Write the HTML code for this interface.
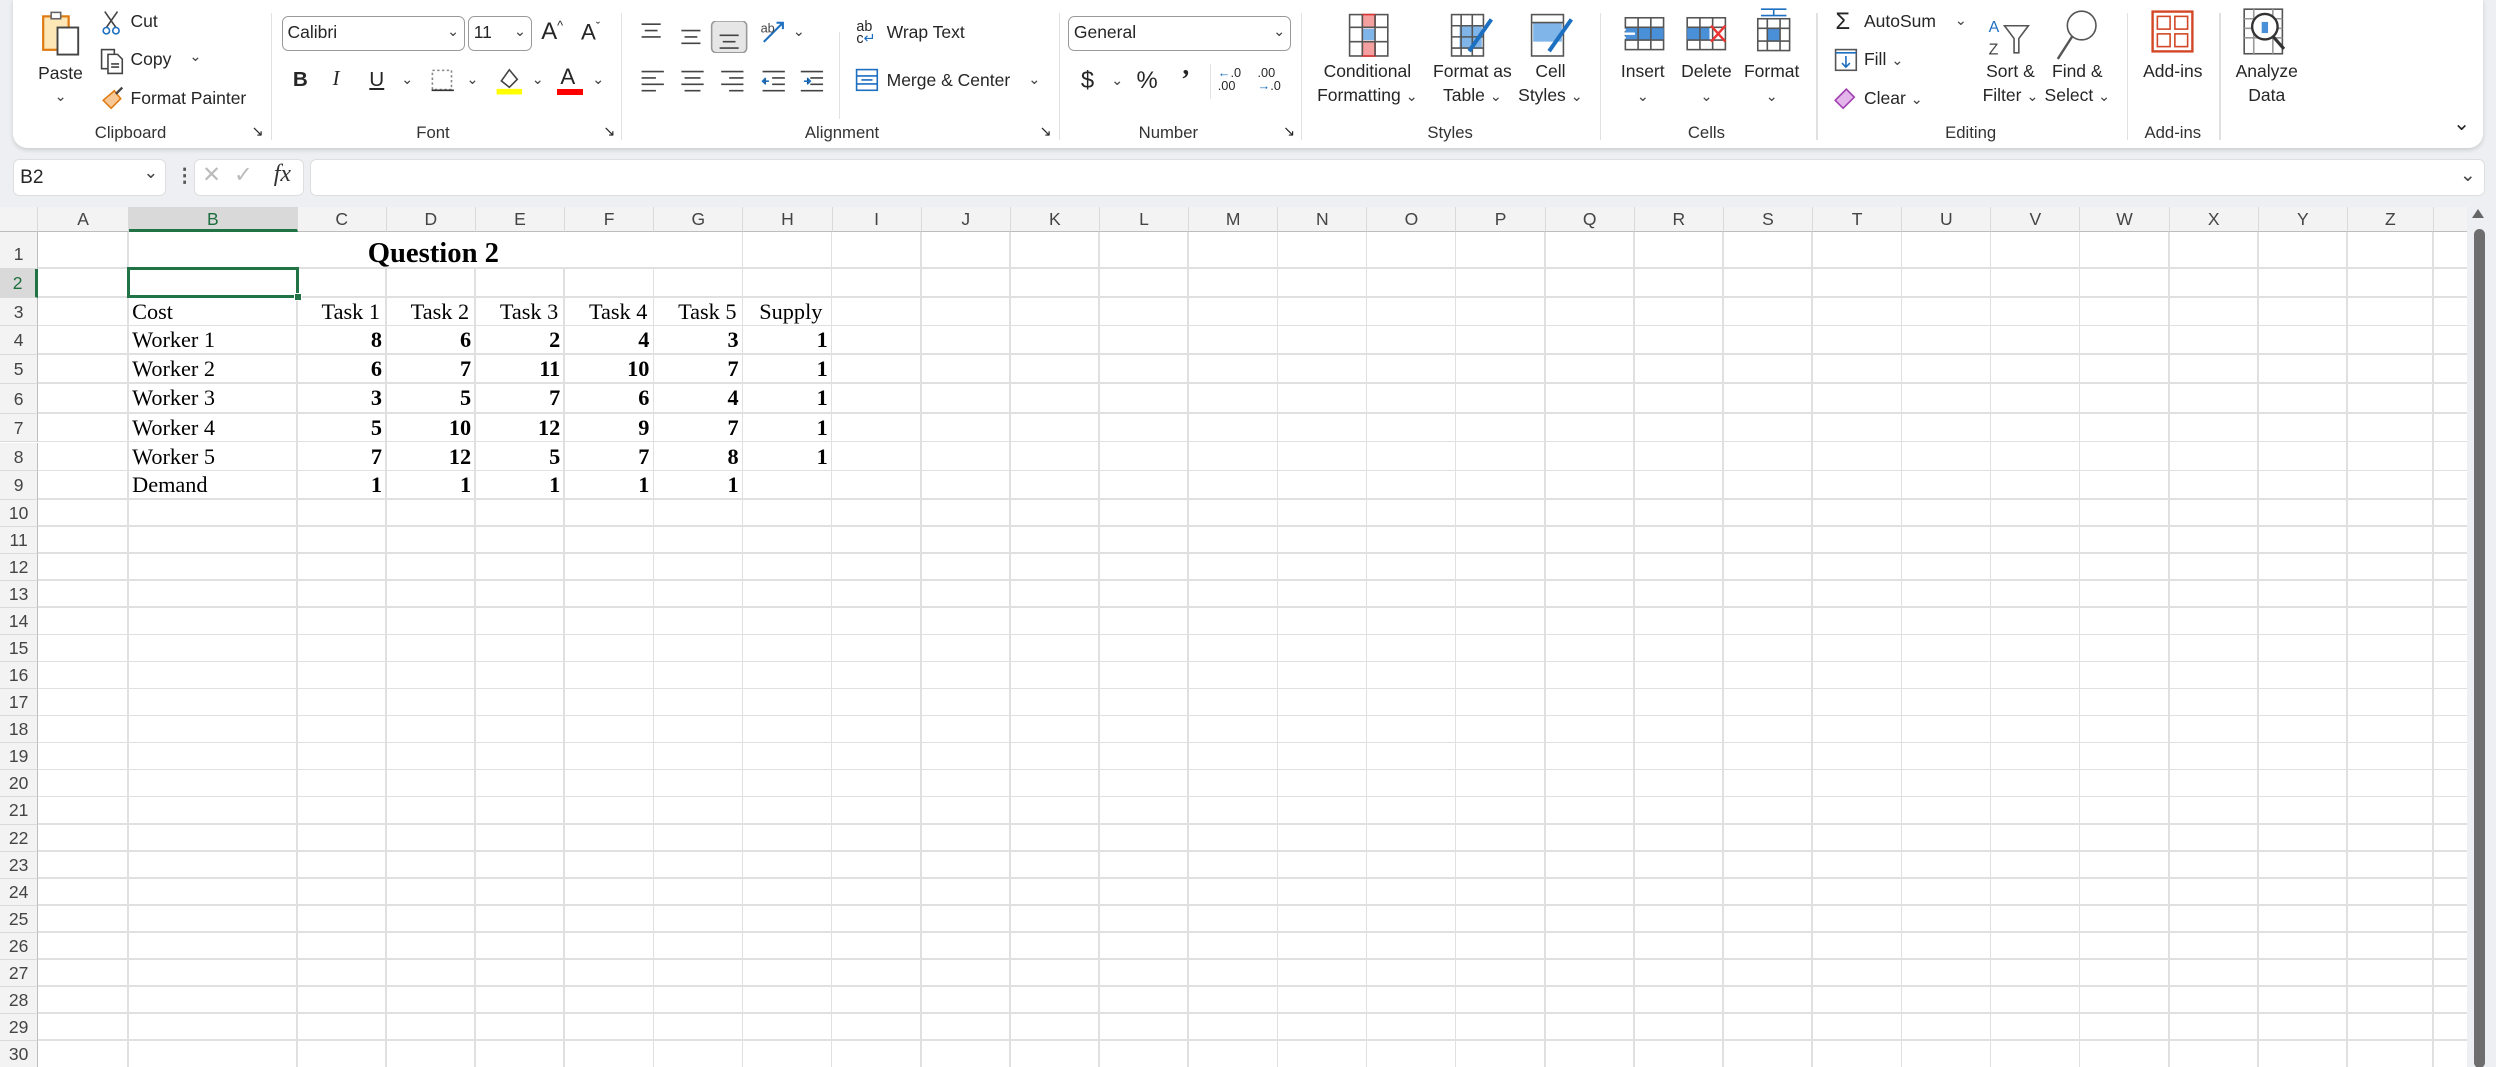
<!DOCTYPE html>
<html><head><meta charset="utf-8">
<style>
*{margin:0;padding:0;box-sizing:border-box}
html,body{width:2496px;height:1067px;overflow:hidden;background:#edeff3}
#w{position:relative;width:1568px;height:671px;zoom:1.5918;font-family:"Liberation Sans",sans-serif;color:#262626;font-size:11px}
.a{position:absolute;white-space:nowrap}
.rib{position:absolute;left:8px;top:0;width:1552px;height:93px;background:#fff;border-radius:0 0 9px 9px;box-shadow:0 1px 3px rgba(0,0,0,.15)}
.sep{position:absolute;top:8px;width:1px;height:80px;background:#e1e1e1}
.lbl{position:absolute;top:77px;font-size:10.5px;color:#333;transform:translateX(-50%)}
.c{transform:translateX(-50%);text-align:center;line-height:15px}
.dd{position:absolute;border:1px solid #9a9a9a;border-radius:4px;background:#fff;height:22px;line-height:20px;padding-left:3px;font-size:11px}
.chev{font-size:9px;color:#444}
.grid{position:absolute;left:0;top:130px;width:1550px;height:541px;background:#fff}
.ch{position:absolute;top:0;height:16px;line-height:16px;text-align:center;font-size:11px;color:#444;background:#f3f3f3;border-right:1px solid #dadada;border-bottom:1px solid #bdbdbd}
.rh{position:absolute;left:0;width:24px;text-align:center;font-size:11px;color:#444;background:#f3f3f3;border-bottom:1px solid #dadada;border-right:1px solid #bdbdbd}
.vl{position:absolute;top:16px;width:1px;height:525px;background:#e0e0e0}
.hl{position:absolute;left:24px;width:1526px;height:1px;background:#e0e0e0}
.t{position:absolute;font-family:"Liberation Serif",serif;font-size:14px;color:#000;line-height:18px}
.n{font-weight:bold;text-align:right;width:52px}
</style></head><body><div id="w">

<div class="rib"></div>
<!-- Clipboard -->
<svg class="a" style="left:25px;top:6px" width="30" height="30" viewBox="0 0 30 30"><rect x="2" y="4" width="16" height="21" fill="#fde7b7" stroke="#e07b12" stroke-width="1.4"/><rect x="7" y="1.5" width="6" height="4" fill="#fff" stroke="#666"/><rect x="11" y="11" width="13" height="17" fill="#fff" stroke="#444" stroke-width="1.2"/></svg>
<div class="a c" style="left:38px;top:39px">Paste</div>
<div class="a c chev" style="left:38px;top:54px">&#8964;</div>
<svg class="a" style="left:63px;top:6px" width="14" height="16"><path d="M3 1 L10 11 M11 1 L4 11" stroke="#444" fill="none"/><circle cx="4" cy="13" r="2" fill="none" stroke="#1d6fc0"/><circle cx="10" cy="13" r="2" fill="none" stroke="#1d6fc0"/></svg>
<div class="a" style="left:82px;top:7px">Cut</div>
<svg class="a" style="left:63px;top:30px" width="16" height="17"><rect x="1" y="1" width="8" height="12" fill="none" stroke="#444"/><path d="M5 4h6l3 3v9H5z" fill="#fff" stroke="#444"/><path d="M7 10h5M7 12h5" stroke="#444"/></svg>
<div class="a" style="left:82px;top:31px">Copy</div>
<div class="a chev" style="left:119px;top:31px">&#8964;</div>
<svg class="a" style="left:63px;top:54px" width="16" height="16"><path d="M2 9 L9 3 L13 8 L7 14 Z" fill="#f7c896" stroke="#e07b12"/><path d="M10 5 L14 1" stroke="#444" stroke-width="1.5"/></svg>
<div class="a" style="left:82px;top:55px">Format Painter</div>
<div class="lbl" style="left:82px">Clipboard</div>
<div class="a" style="left:158px;top:78px;font-size:9px">&#8600;</div>
<div class="sep" style="left:170px"></div>
<!-- Font -->
<div class="dd" style="left:177px;top:10px;width:115px">Calibri<span class="chev" style="position:absolute;right:3px">&#8964;</span></div>
<div class="dd" style="left:294px;top:10px;width:40px">11<span class="chev" style="position:absolute;right:3px">&#8964;</span></div>
<div class="a" style="left:340px;top:11px;font-size:15px">A<sup style="font-size:8px">^</sup></div>
<div class="a" style="left:365px;top:12px;font-size:14px">A<sup style="font-size:8px">&#711;</sup></div>
<div class="a" style="left:184px;top:43px;font-weight:bold;font-size:13px">B</div>
<div class="a" style="left:209px;top:43px;font-style:italic;font-size:13px;font-family:'Liberation Serif',serif">I</div>
<div class="a" style="left:232px;top:43px;text-decoration:underline;font-size:13px">U</div>
<div class="a chev" style="left:252px;top:45px">&#8964;</div>
<svg class="a" style="left:270px;top:43px" width="16" height="16"><rect x="1.5" y="1.5" width="12" height="12" fill="none" stroke="#888" stroke-dasharray="1.5 1.5"/><path d="M1 14h14" stroke="#333"/></svg>
<div class="a chev" style="left:293px;top:45px">&#8964;</div>
<svg class="a" style="left:311px;top:41px" width="18" height="19"><path d="M4 10 L9 3 L14 9 L9 14 Z" fill="none" stroke="#444"/><rect x="1" y="15" width="16" height="3.5" fill="#ffff00"/></svg>
<div class="a chev" style="left:334px;top:45px">&#8964;</div>
<div class="a" style="left:352px;top:40px;font-size:14px">A</div>
<div class="a" style="left:350px;top:56px;width:16px;height:3.5px;background:#ff0000"></div>
<div class="a chev" style="left:372px;top:45px">&#8964;</div>
<div class="lbl" style="left:272px">Font</div>
<div class="a" style="left:379px;top:78px;font-size:9px">&#8600;</div>
<div class="sep" style="left:390px"></div>
<!-- Alignment -->
<svg class="a" style="left:402px;top:13px" width="70" height="20"><path d="M1 2h12M3 6h8M1 10h12" stroke="#444"/><path d="M26 6h12M28 10h8M26 14h12" stroke="#444"/><rect x="45" y="0" width="22" height="20" rx="3" fill="#e6e6e6" stroke="#999"/><path d="M50 9h12M52 13h8M50 17h12" stroke="#444"/></svg>
<svg class="a" style="left:477px;top:11px" width="18" height="18"><path d="M3 15 L15 3 M11 3h4v4" stroke="#1d6fc0" fill="none" stroke-width="1.3"/><text x="1" y="9" font-size="8" fill="#444" font-family="Liberation Sans">ab</text></svg>
<div class="a chev" style="left:498px;top:15px">&#8964;</div>
<svg class="a" style="left:402px;top:44px" width="120" height="14"><path d="M1 1h14M1 5h9M1 9h14M1 13h9M26 1h14M28 5h10M26 9h14M28 13h10M51 1h14M56 5h9M51 9h14M56 13h9M77 1h14M83 5h8M83 9h8M77 13h14M101 1h14M107 5h8M107 9h8M101 13h14" stroke="#444"/><path d="M81 7h-4M79 5l-2 2 2 2M103 7h4M105 5l2 2-2 2" stroke="#1d6fc0"/></svg>
<div class="sep" style="left:527px;top:20px;height:55px"></div>
<div class="a" style="left:538px;top:13px;font-size:9px;line-height:8px">ab<br>c<span style="color:#1d6fc0">&#8629;</span></div>
<div class="a" style="left:557px;top:14px">Wrap Text</div>
<svg class="a" style="left:537px;top:43px" width="15" height="15"><rect x="1" y="1" width="13" height="13" fill="#fff" stroke="#1d6fc0"/><path d="M1 5h13M1 10h13M4 7.5h7" stroke="#1d6fc0"/></svg>
<div class="a" style="left:557px;top:44px">Merge &amp; Center</div>
<div class="a chev" style="left:646px;top:45px">&#8964;</div>
<div class="lbl" style="left:529px">Alignment</div>
<div class="a" style="left:653px;top:78px;font-size:9px">&#8600;</div>
<div class="sep" style="left:665px"></div>
<!-- Number -->
<div class="dd" style="left:671px;top:10px;width:140px">General<span class="chev" style="position:absolute;right:3px">&#8964;</span></div>
<div class="a" style="left:679px;top:42px;font-size:15px">$</div>
<div class="a chev" style="left:698px;top:46px">&#8964;</div>
<div class="a" style="left:714px;top:42px;font-size:15px">%</div>
<div class="a" style="left:742px;top:40px;font-size:17px;font-weight:bold;font-family:'Liberation Serif',serif">&#8217;</div>
<div class="sep" style="left:760px;top:40px;height:22px"></div>
<div class="a" style="left:765px;top:42px;font-size:8px;line-height:8px"><span style="color:#1d6fc0">&#8592;</span>.0<br>.00</div>
<div class="a" style="left:790px;top:42px;font-size:8px;line-height:8px">.00<br><span style="color:#1d6fc0">&#8594;</span>.0</div>
<div class="lbl" style="left:734px">Number</div>
<div class="a" style="left:806px;top:78px;font-size:9px">&#8600;</div>
<div class="sep" style="left:817px"></div>
<!-- Styles -->
<svg class="a" style="left:847px;top:8px" width="26" height="28"><rect x="1" y="1" width="24" height="26" fill="#fff" stroke="#555"/><rect x="9" y="1" width="8" height="8" fill="#f4a0a0" stroke="#d33"/><rect x="9" y="18" width="8" height="9" fill="#f4a0a0" stroke="#d33"/><rect x="9" y="10" width="8" height="7" fill="#7fb5e8"/><path d="M1 9h24M1 18h24M9 1v26M17 1v26" stroke="#555"/></svg>
<svg class="a" style="left:911px;top:8px" width="28" height="28"><rect x="1" y="1" width="20" height="26" fill="#fff" stroke="#555"/><rect x="6" y="8" width="14" height="14" fill="#7fb5e8"/><path d="M1 8h20M1 15h20M1 22h20M7 1v26M14 1v26" stroke="#555"/><path d="M26 4 L12 24" stroke="#1d6fc0" stroke-width="2.5"/></svg>
<svg class="a" style="left:961px;top:8px" width="28" height="28"><rect x="1" y="1" width="20" height="26" fill="#fff" stroke="#555"/><rect x="2" y="6" width="18" height="12" fill="#7fb5e8"/><path d="M1 6h20" stroke="#555"/><path d="M26 4 L12 24" stroke="#1d6fc0" stroke-width="2.5"/></svg>
<div class="a c" style="left:859px;top:38px">Conditional<br>Formatting <span class="chev">&#8964;</span></div>
<div class="a c" style="left:925px;top:38px">Format as<br>Table <span class="chev">&#8964;</span></div>
<div class="a c" style="left:974px;top:38px">Cell<br>Styles <span class="chev">&#8964;</span></div>
<div class="lbl" style="left:911px">Styles</div>
<div class="sep" style="left:1005px"></div>
<!-- Cells -->
<svg class="a" style="left:1017px;top:8px" width="30" height="26"><rect x="4" y="3" width="24" height="20" fill="#fff" stroke="#555"/><rect x="4" y="9" width="24" height="8" fill="#4a90d9"/><path d="M12 3v20M20 3v20M4 9h24M4 17h24" stroke="#555"/><path d="M1 13h9M4 10l-3 3 3 3" stroke="#fff" stroke-width="1.5" fill="none"/></svg>
<svg class="a" style="left:1058px;top:8px" width="30" height="26"><rect x="2" y="3" width="24" height="20" fill="#fff" stroke="#555"/><rect x="2" y="9" width="14" height="8" fill="#4a90d9"/><path d="M10 3v20M18 3v20M2 9h24M2 17h24" stroke="#555"/><path d="M17 8l9 10M26 8l-9 10" stroke="#e33" stroke-width="1.5"/></svg>
<svg class="a" style="left:1101px;top:4px" width="26" height="30"><path d="M5 2h16M13 2v4M5 6h16" stroke="#1d6fc0"/><rect x="3" y="8" width="20" height="20" fill="#fff" stroke="#555"/><rect x="9" y="14" width="8" height="8" fill="#4a90d9"/><path d="M9 8v20M17 8v20M3 14h20M3 22h20" stroke="#555"/></svg>
<div class="a c" style="left:1032px;top:38px">Insert<br><span class="chev">&#8964;</span></div>
<div class="a c" style="left:1072px;top:38px">Delete<br><span class="chev">&#8964;</span></div>
<div class="a c" style="left:1113px;top:38px">Format<br><span class="chev">&#8964;</span></div>
<div class="lbl" style="left:1072px">Cells</div>
<div class="sep" style="left:1141px"></div>
<!-- Editing -->
<div class="a" style="left:1153px;top:5px;font-size:15px">&#931;</div>
<div class="a" style="left:1171px;top:7px">AutoSum</div>
<div class="a chev" style="left:1228px;top:8px">&#8964;</div>
<svg class="a" style="left:1152px;top:30px" width="16" height="16"><rect x="1" y="1" width="13" height="13" fill="#fff" stroke="#555"/><path d="M1 3h13M7.5 5v7M5 9.5l2.5 2.5 2.5-2.5" stroke="#1d6fc0" fill="none"/></svg>
<div class="a" style="left:1171px;top:31px">Fill <span class="chev">&#8964;</span></div>
<svg class="a" style="left:1151px;top:54px" width="16" height="16"><path d="M2 9 L9 2 L14 7 L7 14 Z" fill="#e3b5ea" stroke="#a040b0"/></svg>
<div class="a" style="left:1171px;top:55px">Clear <span class="chev">&#8964;</span></div>
<svg class="a" style="left:1248px;top:8px" width="30" height="30"><text x="1" y="12" font-size="10" fill="#1d6fc0" font-family="Liberation Sans">A</text><text x="1" y="26" font-size="10" fill="#444" font-family="Liberation Sans">Z</text><path d="M11 8h15l-6 8v9h-3v-9z" fill="none" stroke="#555"/></svg>
<svg class="a" style="left:1290px;top:5px" width="30" height="34"><circle cx="18" cy="11" r="9" fill="none" stroke="#555"/><path d="M12 18 L3 32" stroke="#555" stroke-width="1.5"/></svg>
<div class="a c" style="left:1263px;top:38px">Sort &amp;<br>Filter <span class="chev">&#8964;</span></div>
<div class="a c" style="left:1305px;top:38px">Find &amp;<br>Select <span class="chev">&#8964;</span></div>
<div class="lbl" style="left:1238px">Editing</div>
<div class="sep" style="left:1336px"></div>
<!-- Add-ins -->
<svg class="a" style="left:1351px;top:6px" width="28" height="28"><rect x="1" y="1" width="25" height="25" fill="#fff" stroke="#d24726" stroke-width="1.5"/><rect x="4" y="4" width="8" height="8" fill="none" stroke="#d24726"/><rect x="15" y="4" width="8" height="8" fill="none" stroke="#d24726"/><rect x="4" y="15" width="8" height="8" fill="none" stroke="#d24726"/><rect x="15" y="15" width="8" height="8" fill="none" stroke="#d24726"/></svg>
<div class="a c" style="left:1365px;top:38px">Add-ins</div>
<div class="lbl" style="left:1365px">Add-ins</div>
<div class="sep" style="left:1394px"></div>
<svg class="a" style="left:1408px;top:4px" width="32" height="32"><rect x="2" y="2" width="24" height="28" fill="#fff" stroke="#555"/><path d="M2 8h24M2 14h24M2 20h24M8 2v28M20 2v28" stroke="#999"/><circle cx="15" cy="13" r="8" fill="#fff" stroke="#333" stroke-width="1.5"/><rect x="13" y="10" width="4" height="7" fill="#4a90d9"/><path d="M20 19 L27 27" stroke="#333" stroke-width="2"/></svg>
<div class="a c" style="left:1424px;top:38px">Analyze<br>Data</div>
<div class="a" style="left:1541px;top:70px;font-size:13px">&#8964;</div>

<!-- formula bar -->
<div class="a" style="left:8px;top:100px;width:96px;height:23px;background:#fff;border:1px solid #dedede;border-radius:4px;padding:4px 4px;font-size:12px">B2<span class="chev" style="position:absolute;right:4px;font-size:11px;top:1px">&#8964;</span></div>
<div class="a" style="left:110px;top:103px;font-size:12px;color:#555;font-weight:bold">&#8942;</div>
<div class="a" style="left:122px;top:100px;width:69px;height:23px;background:#fff;border:1px solid #dedede;border-radius:4px"></div>
<div class="a" style="left:127px;top:102px;font-size:14px;color:#bbb">&#10005;</div>
<div class="a" style="left:147px;top:102px;font-size:14px;color:#bbb">&#10003;</div>
<div class="a" style="left:172px;top:101px;font-size:15px;font-style:italic;font-family:'Liberation Serif',serif;color:#333">fx</div>
<div class="a" style="left:195px;top:100px;width:1366px;height:23px;background:#fff;border:1px solid #dedede;border-radius:4px"><span class="chev" style="position:absolute;right:5px;top:2px;font-size:12px">&#8964;</span></div>

<!-- grid -->
<div class="grid">
<div class="ch" style="left:0;width:24px;background:#f3f3f3"></div>
<div class="ch" style="left:24px;width:57px">A</div>
<div class="ch" style="left:81px;width:106px;background:#d9d9d9;color:#1e6e3f;border-bottom:2px solid #217346">B</div>
<div class="ch" style="left:187px;width:56px">C</div>
<div class="ch" style="left:243px;width:56px">D</div>
<div class="ch" style="left:299px;width:56px">E</div>
<div class="ch" style="left:355px;width:56px">F</div>
<div class="ch" style="left:411px;width:56px">G</div>
<div class="ch" style="left:467px;width:56px">H</div>
<div class="ch" style="left:523px;width:56px">I</div>
<div class="ch" style="left:579px;width:56px">J</div>
<div class="ch" style="left:635px;width:56px">K</div>
<div class="ch" style="left:691px;width:56px">L</div>
<div class="ch" style="left:747px;width:56px">M</div>
<div class="ch" style="left:803px;width:56px">N</div>
<div class="ch" style="left:859px;width:56px">O</div>
<div class="ch" style="left:915px;width:56px">P</div>
<div class="ch" style="left:971px;width:56px">Q</div>
<div class="ch" style="left:1027px;width:56px">R</div>
<div class="ch" style="left:1083px;width:56px">S</div>
<div class="ch" style="left:1139px;width:56px">T</div>
<div class="ch" style="left:1195px;width:56px">U</div>
<div class="ch" style="left:1251px;width:56px">V</div>
<div class="ch" style="left:1307px;width:56px">W</div>
<div class="ch" style="left:1363px;width:56px">X</div>
<div class="ch" style="left:1419px;width:56px">Y</div>
<div class="ch" style="left:1475px;width:54px">Z</div>
<div class="ch" style="left:1529px;width:21px;border-right:none"></div>

<div class="vl" style="left:80px"></div><div class="vl" style="left:186px"></div><div class="vl" style="left:242px"></div><div class="vl" style="left:298px"></div><div class="vl" style="left:354px"></div><div class="vl" style="left:410px"></div><div class="vl" style="left:466px"></div><div class="vl" style="left:522px"></div><div class="vl" style="left:578px"></div><div class="vl" style="left:634px"></div><div class="vl" style="left:690px"></div><div class="vl" style="left:746px"></div><div class="vl" style="left:802px"></div><div class="vl" style="left:858px"></div><div class="vl" style="left:914px"></div><div class="vl" style="left:970px"></div><div class="vl" style="left:1026px"></div><div class="vl" style="left:1082px"></div><div class="vl" style="left:1138px"></div><div class="vl" style="left:1194px"></div><div class="vl" style="left:1250px"></div><div class="vl" style="left:1306px"></div><div class="vl" style="left:1362px"></div><div class="vl" style="left:1418px"></div><div class="vl" style="left:1474px"></div><div class="vl" style="left:1528px"></div>

<!-- merged B1:G1 -->
<div class="a" style="left:81px;top:16px;width:385px;height:22px;background:#fff"></div>

<div class="hl" style="top:38px"></div><div class="hl" style="top:56px"></div><div class="hl" style="top:74px"></div><div class="hl" style="top:92px"></div><div class="hl" style="top:110px"></div><div class="hl" style="top:129px"></div><div class="hl" style="top:147px"></div><div class="hl" style="top:165px"></div><div class="hl" style="top:183px"></div>
<div class="hl" style="top:200px"></div><div class="hl" style="top:217px"></div><div class="hl" style="top:234px"></div><div class="hl" style="top:251px"></div><div class="hl" style="top:268px"></div><div class="hl" style="top:285px"></div><div class="hl" style="top:302px"></div><div class="hl" style="top:319px"></div><div class="hl" style="top:336px"></div><div class="hl" style="top:353px"></div><div class="hl" style="top:370px"></div><div class="hl" style="top:387px"></div><div class="hl" style="top:404px"></div><div class="hl" style="top:421px"></div><div class="hl" style="top:438px"></div><div class="hl" style="top:455px"></div><div class="hl" style="top:472px"></div><div class="hl" style="top:489px"></div><div class="hl" style="top:506px"></div><div class="hl" style="top:523px"></div>

<div class="rh" style="top:16px;height:23px;line-height:28px">1</div>
<div class="rh" style="top:39px;height:18px;line-height:18px;background:#d9d9d9;color:#1e6e3f;border-right:2px solid #217346">2</div>
<div class="rh" style="top:57px;height:18px;line-height:18px">3</div>
<div class="rh" style="top:75px;height:18px;line-height:18px">4</div>
<div class="rh" style="top:93px;height:18px;line-height:18px">5</div>
<div class="rh" style="top:111px;height:19px;line-height:19px">6</div>
<div class="rh" style="top:130px;height:18px;line-height:18px">7</div>
<div class="rh" style="top:148px;height:18px;line-height:18px">8</div>
<div class="rh" style="top:166px;height:18px;line-height:18px">9</div>
<div class="rh" style="top:184px;height:17px;line-height:17px">10</div>
<div class="rh" style="top:201px;height:17px;line-height:17px">11</div>
<div class="rh" style="top:218px;height:17px;line-height:17px">12</div>
<div class="rh" style="top:235px;height:17px;line-height:17px">13</div>
<div class="rh" style="top:252px;height:17px;line-height:17px">14</div>
<div class="rh" style="top:269px;height:17px;line-height:17px">15</div>
<div class="rh" style="top:286px;height:17px;line-height:17px">16</div>
<div class="rh" style="top:303px;height:17px;line-height:17px">17</div>
<div class="rh" style="top:320px;height:17px;line-height:17px">18</div>
<div class="rh" style="top:337px;height:17px;line-height:17px">19</div>
<div class="rh" style="top:354px;height:17px;line-height:17px">20</div>
<div class="rh" style="top:371px;height:17px;line-height:17px">21</div>
<div class="rh" style="top:388px;height:17px;line-height:17px">22</div>
<div class="rh" style="top:405px;height:17px;line-height:17px">23</div>
<div class="rh" style="top:422px;height:17px;line-height:17px">24</div>
<div class="rh" style="top:439px;height:17px;line-height:17px">25</div>
<div class="rh" style="top:456px;height:17px;line-height:17px">26</div>
<div class="rh" style="top:473px;height:17px;line-height:17px">27</div>
<div class="rh" style="top:490px;height:17px;line-height:17px">28</div>
<div class="rh" style="top:507px;height:17px;line-height:17px">29</div>
<div class="rh" style="top:524px;height:17px;line-height:17px">30</div>

<div class="t" style="left:231px;top:18px;font-size:18px;font-weight:bold;line-height:22px">Question 2</div>
<div class="a" style="left:80px;top:38px;width:108px;height:19px;border:2px solid #217346"></div>
<div class="a" style="left:185px;top:54px;width:5px;height:5px;background:#217346;border:1px solid #fff"></div>

<div class="t" style="left:83px;top:57px">Cost</div>
<div class="t" style="left:83px;top:75px">Worker 1</div>
<div class="t" style="left:83px;top:93px">Worker 2</div>
<div class="t" style="left:83px;top:111px">Worker 3</div>
<div class="t" style="left:83px;top:130px">Worker 4</div>
<div class="t" style="left:83px;top:148px">Worker 5</div>
<div class="t" style="left:83px;top:166px">Demand</div>

<div class="t" style="left:202px;top:57px">Task 1</div>
<div class="t" style="left:258px;top:57px">Task 2</div>
<div class="t" style="left:314px;top:57px">Task 3</div>
<div class="t" style="left:370px;top:57px">Task 4</div>
<div class="t" style="left:426px;top:57px">Task 5</div>
<div class="t" style="left:477px;top:57px">Supply</div>

<div class="t n" style="left:188px;top:75px">8</div><div class="t n" style="left:244px;top:75px">6</div><div class="t n" style="left:300px;top:75px">2</div><div class="t n" style="left:356px;top:75px">4</div><div class="t n" style="left:412px;top:75px">3</div><div class="t n" style="left:468px;top:75px">1</div>
<div class="t n" style="left:188px;top:93px">6</div><div class="t n" style="left:244px;top:93px">7</div><div class="t n" style="left:300px;top:93px">11</div><div class="t n" style="left:356px;top:93px">10</div><div class="t n" style="left:412px;top:93px">7</div><div class="t n" style="left:468px;top:93px">1</div>
<div class="t n" style="left:188px;top:111px">3</div><div class="t n" style="left:244px;top:111px">5</div><div class="t n" style="left:300px;top:111px">7</div><div class="t n" style="left:356px;top:111px">6</div><div class="t n" style="left:412px;top:111px">4</div><div class="t n" style="left:468px;top:111px">1</div>
<div class="t n" style="left:188px;top:130px">5</div><div class="t n" style="left:244px;top:130px">10</div><div class="t n" style="left:300px;top:130px">12</div><div class="t n" style="left:356px;top:130px">9</div><div class="t n" style="left:412px;top:130px">7</div><div class="t n" style="left:468px;top:130px">1</div>
<div class="t n" style="left:188px;top:148px">7</div><div class="t n" style="left:244px;top:148px">12</div><div class="t n" style="left:300px;top:148px">5</div><div class="t n" style="left:356px;top:148px">7</div><div class="t n" style="left:412px;top:148px">8</div><div class="t n" style="left:468px;top:148px">1</div>
<div class="t n" style="left:188px;top:166px">1</div><div class="t n" style="left:244px;top:166px">1</div><div class="t n" style="left:300px;top:166px">1</div><div class="t n" style="left:356px;top:166px">1</div><div class="t n" style="left:412px;top:166px">1</div>
</div>
<!-- scrollbar -->
<div class="a" style="left:1550px;top:126px;width:18px;height:545px;background:#edeff3"></div>
<div class="a" style="left:1553px;top:131px;width:0;height:0;border-left:4px solid transparent;border-right:4px solid transparent;border-bottom:6px solid #666"></div>
<div class="a" style="left:1554px;top:144px;width:7px;height:527px;background:#6e6e6e;border-radius:4px"></div>
</div></body></html>
